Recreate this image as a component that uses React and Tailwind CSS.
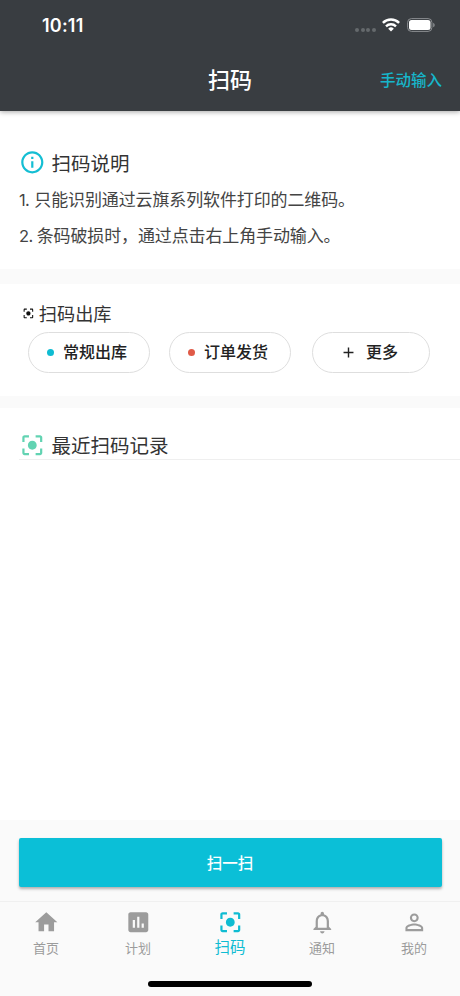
import React from "react";
import {
  MdHome,
  MdAssessment,
  MdCenterFocusStrong,
  MdNotificationsNone,
  MdPermIdentity,
  MdInfoOutline,
  MdAdd,
} from "react-icons/md";

const tabs = [
  { label: "首页", Icon: MdHome },
  { label: "计划", Icon: MdAssessment },
  { label: "扫码", Icon: MdCenterFocusStrong, active: true },
  { label: "通知", Icon: MdNotificationsNone },
  { label: "我的", Icon: MdPermIdentity },
];

const StatusBar = () => (
  <div className="flex h-[51px] items-center justify-between pl-[42px] pr-[25px]">
    <span className="pt-px font-['Inter'] text-[18px] font-semibold leading-none tracking-[0.2px]">
      10:11
    </span>
    <div className="flex items-center pb-px">
      <div className="mr-[6px] mt-[9px] flex gap-[1.7px]">
        {[0, 1, 2, 3].map((dot) => (
          <span key={dot} className="size-[4px] rounded-full bg-[#65696c]" />
        ))}
      </div>
      <svg className="mr-[7px] h-[14px] w-[18px]" viewBox="0 0 18 14" fill="none" stroke="#fff">
        <path d="M0.9 4.9a11.6 11.6 0 0 1 16.2 0" strokeWidth="2.5" />
        <path d="M4 8.3a7.2 7.2 0 0 1 10 0" strokeWidth="2.4" />
        <path d="M9 13.5L6.2 10.7a4 4 0 0 1 5.6 0z" fill="#fff" stroke="none" />
      </svg>
      <svg className="h-[14px] w-[28px]" viewBox="0 0 28 14">
        <rect x="0.6" y="0.6" width="24.3" height="12.8" rx="3.8" fill="none" stroke="#8b8e91" />
        <rect x="2" y="2" width="21.5" height="10" rx="2.5" fill="#fff" />
        <path d="M26.2 4.7a2.5 2.5 0 0 1 0 4.6z" fill="#8b8e91" />
      </svg>
    </div>
  </div>
);

const Header = () => (
  <header className="relative h-[111px] bg-[#393d41] text-white shadow-[0_1px_5px_rgba(0,0,0,0.35)]">
    <StatusBar />
    <div className="grid h-[57px] grid-cols-3 items-center">
      <h1 className="col-start-2 pb-[3px] text-center text-[22px] font-medium leading-[30px]">扫码</h1>
      <span className="pb-px pr-[18px] text-right text-[15.5px] font-medium leading-[22px] text-[#16b6cb]">
        手动输入
      </span>
    </div>
  </header>
);

const Pill = ({ children, className }) => (
  <button
    className={`flex h-[41px] items-center justify-center rounded-full border border-[#dedede] pr-[4px] text-[16px] font-medium text-[#222] ${className}`}
  >
    {children}
  </button>
);

const App = () => {
  return (
    <div className="flex h-[996px] w-[460px] flex-col overflow-hidden bg-[#fafafa] font-['Noto_Sans_CJK_SC',sans-serif] text-[#333]">
      <Header />

      <section className="h-[158px] bg-white pl-[19px] pt-[38px]">
        <div className="flex h-[27px] items-center">
          <MdInfoOutline className="size-[26.6px] text-[#14bed3]" />
          <h2 className="ml-[6px] pb-px text-[19.5px] leading-[25px]">扫码说明</h2>
        </div>
        <p className="mt-[5px] text-[17px] leading-[36px] tracking-[-0.12px] text-[#444]">
          <span className="mr-[5px] font-['Inter'] text-[16.5px] tracking-[-0.6px]">1.</span>
          只能识别通过云旗系列软件打印的二维码。
        </p>
        <p className="-mt-px text-[17px] leading-[36px] tracking-[-0.12px] text-[#444]">
          <span className="mr-[4px] font-['Inter'] text-[16.5px] tracking-[-0.6px]">2.</span>
          条码破损时，通过点击右上角手动输入。
        </p>
      </section>

      <section className="mt-[15px] h-[112px] bg-white pt-[16px]">
        <div className="flex h-[27px] items-center pl-[22px]">
          <MdCenterFocusStrong className="size-[12.8px] text-[#111]" />
          <h2 className="ml-[4px] text-[18.2px] leading-[27px]">扫码出库</h2>
        </div>
        <div className="mt-[5px] flex pl-[28px]">
          <Pill className="w-[122px]">
            <span className="mr-[9px] size-[7px] rounded-full bg-[#0fbcd2]" />
            <span className="pb-[3px] leading-[22px]">常规出库</span>
          </Pill>
          <Pill className="ml-[19px] w-[122px]">
            <span className="mr-[9px] size-[7px] rounded-full bg-[#e05a47]" />
            <span className="pb-[3px] leading-[22px]">订单发货</span>
          </Pill>
          <Pill className="ml-[21px] w-[118px]">
            <MdAdd className="mr-[9px] size-[17px]" />
            <span className="pb-[3px] leading-[22px]">更多</span>
          </Pill>
        </div>
      </section>

      <section className="mt-[12px] h-[412px] bg-white pt-[24px]">
        <div className="ml-[19px] flex h-[28px] items-center border-b border-[#efefef]">
          <MdCenterFocusStrong className="size-[26.6px] text-[#62d3b2]" />
          <h2 className="ml-[6px] pb-[2px] text-[19.5px] leading-[25px]">最近扫码记录</h2>
        </div>
      </section>

      <div className="h-[81px] px-[18.5px] pt-[18px]">
        <button className="h-[49px] w-full rounded-[2px] bg-[#0bbfd7] text-[15.5px] font-medium text-white shadow-[0_2px_3px_rgba(0,0,0,0.3)]">
          扫一扫
        </button>
      </div>

      <nav className="grid h-[95px] grid-cols-5 border-t border-[#f0f0f0] pt-[7px]">
        {tabs.map(({ label, Icon, active }) => (
          <div
            key={label}
            className={`flex flex-col items-center ${active ? "text-[#0fbcd2]" : "text-[#9c9c9c]"}`}
          >
            <Icon className="size-[26.6px]" />
            <span className={active ? "text-[15.5px] leading-[20px]" : "text-[13px] leading-[24px]"}>
              {label}
            </span>
          </div>
        ))}
      </nav>
      <div className="absolute left-[148px] top-[981px] h-[5.5px] w-[164px] rounded-full bg-black" />
    </div>
  );
};

export default App;
